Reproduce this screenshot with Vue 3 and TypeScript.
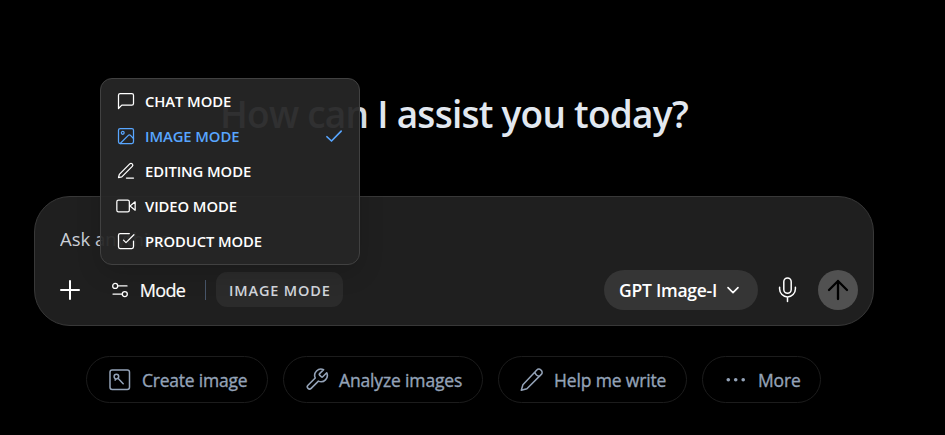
<script setup lang="ts">
import { ref } from 'vue'

interface Mode {
  id: string
  label: string
  paths: string[]
}

const modes: Mode[] = [
  { id: 'chat', label: 'CHAT MODE', paths: ['M21 15a2 2 0 0 1-2 2H7l-4 4V5a2 2 0 0 1 2-2h14a2 2 0 0 1 2 2z'] },
  {
    id: 'image',
    label: 'IMAGE MODE',
    paths: [
      'M5 3h14a2 2 0 0 1 2 2v14a2 2 0 0 1-2 2H5a2 2 0 0 1-2-2V5a2 2 0 0 1 2-2z',
      'M9.8 8.2a1.7 1.7 0 1 1-3.4 0 1.7 1.7 0 0 1 3.4 0z',
      'm21 15-3.6-3.8a1.8 1.8 0 0 0-2.6 0L5 21',
    ],
  },
  { id: 'editing', label: 'EDITING MODE', paths: ['M12.5 20.5H21', 'M16.5 3.5a2.12 2.12 0 0 1 3 3L7 19l-4 1 1-4z'] },
  {
    id: 'video',
    label: 'VIDEO MODE',
    paths: ['M3 5h11a2 2 0 0 1 2 2v10a2 2 0 0 1-2 2H3a2 2 0 0 1-2-2V7a2 2 0 0 1 2-2z', 'm23 7-6.2 5 6.2 5z'],
  },
  {
    id: 'product',
    label: 'PRODUCT MODE',
    paths: ['m9 11 3 3L21.5 4.5', 'M21 12v7a2 2 0 0 1-2 2H5a2 2 0 0 1-2-2V5a2 2 0 0 1 2-2h11'],
  },
]

const selected = ref('image')
const prompt = ref('')
</script>

<template>
  <main class="page">
    <h1 class="title">How can I assist you today?</h1>

    <section class="composer">
      <input v-model="prompt" class="prompt" type="text" placeholder="Ask anything" />
      <div class="toolbar">
        <button class="plain add" aria-label="Add">
          <svg width="24" height="24" viewBox="0 0 24 24" stroke-width="2"><path d="M12 3v18M3 12h18" /></svg>
        </button>
        <button class="plain mode">
          <svg width="18" height="18" viewBox="0 0 18 18" stroke-width="1.3">
            <circle cx="4.2" cy="4.9" r="2.5" /><path d="M6.8 4.9H16M2 13.1h9.2" /><circle cx="13.8" cy="13.1" r="2.5" />
          </svg>
          <span class="mode-text">Mode</span>
        </button>
        <span class="divider"></span>
        <span class="badge">IMAGE MODE</span>
        <button class="model">
          <span class="model-text">GPT Image-I</span>
          <svg width="16" height="16" viewBox="0 0 24 24" stroke-width="2.4"><path d="m4.5 8.5 7.5 7.5 7.5-7.5" /></svg>
        </button>
        <button class="plain mic" aria-label="Dictate">
          <svg width="24" height="26" viewBox="0 0 24 26" stroke-width="1.5">
            <rect x="8.8" y="1" width="7.4" height="15.2" rx="3.7" />
            <path d="M4.6 10.3v1.7a7.9 7.9 0 0 0 15.8 0v-1.7M12.5 19.9v4.6" />
          </svg>
        </button>
        <button class="send" aria-label="Send">
          <svg width="24" height="24" viewBox="0 0 24 24" stroke-width="2.3"><path d="M12 21V3M3 12l9-9 9 9" /></svg>
        </button>
      </div>
    </section>

    <nav class="actions">
      <button class="chip create">
        <svg width="24" height="24" viewBox="0 0 24 24" stroke-width="1.5">
          <rect x="2" y="2" width="19.5" height="19.5" rx="2.2" />
          <circle cx="8.4" cy="8.6" r="2.3" /><path d="m10 10.2 5.2 5.5M7.8 10.8l-.7 1.4" />
        </svg>
        <span>Create image</span>
      </button>
      <button class="chip analyze">
        <svg width="24" height="24" viewBox="0 0 24 24" stroke-width="1.5">
          <path d="M14.7 6.3a1 1 0 0 0 0 1.4l1.6 1.6a1 1 0 0 0 1.4 0l3.77-3.77a6 6 0 0 1-7.94 7.94l-6.91 6.91a2.12 2.12 0 0 1-3-3l6.91-6.91a6 6 0 0 1 7.94-7.94z" transform="translate(-.8 -1) scale(1.05)" />
        </svg>
        <span>Analyze images</span>
      </button>
      <button class="chip write">
        <svg width="24" height="24" viewBox="0 0 24 24" stroke-width="1.5">
          <path d="m16.9 2.4a2.8 2.8 0 0 1 4 0l.5.5a2.8 2.8 0 0 1 0 4L7 21.2l-5.6 1.6L3 17.2zM15.2 4.2a4.4 4.4 0 0 0 4.6 4.5" transform="translate(-.1 -.5)" />
        </svg>
        <span>Help me write</span>
      </button>
      <button class="chip more">
        <svg width="24" height="24" viewBox="0 0 24 24" stroke="none">
          <circle cx="4.3" cy="11.8" r="1.8" /><circle cx="11.7" cy="11.8" r="1.8" /><circle cx="19.2" cy="11.8" r="1.8" />
        </svg>
        <span>More</span>
      </button>
    </nav>

    <ul class="menu">
      <li
        v-for="mode in modes"
        :key="mode.id"
        :class="['option', mode.id, { active: mode.id === selected }]"
        @click="selected = mode.id"
      >
        <svg width="20" height="20" viewBox="0 0 24 24" stroke-width="1.5">
          <path v-for="d in mode.paths" :key="d" :d="d" />
        </svg>
        <span class="label">{{ mode.label }}</span>
        <svg v-if="mode.id === selected" class="check" width="20" height="20" viewBox="0 0 24 24" stroke-width="2">
          <path d="M3.5 12.9 9 18 20.6 6.2" />
        </svg>
      </li>
    </ul>
  </main>
</template>

<style>
body {
  background: #000;
}
</style>

<style scoped>
.page {
  position: relative;
  box-sizing: border-box;
  width: 945px;
  height: 435px;
  padding: 84px 71px 0 34px;
  overflow: hidden;
  background: #000;
  color: #fff;
  font-family: 'Segoe UI', 'Open Sans', 'Noto Sans', sans-serif;
}
svg {
  display: block;
  flex: none;
  fill: none;
  stroke: currentColor;
  stroke-linecap: round;
  stroke-linejoin: round;
}
svg[stroke='none'] {
  fill: currentColor;
  stroke: none;
}
button {
  display: flex;
  align-items: center;
  margin: 0;
  padding: 0;
  border: 0;
  background: none;
  color: inherit;
  font-family: inherit;
  white-space: nowrap;
}
.title {
  height: 60px;
  margin: 0;
  color: #e2e8f0;
  font-size: 37px;
  font-weight: 600;
  letter-spacing: -0.74px;
  line-height: 60px;
  text-align: center;
  white-space: nowrap;
}
.composer {
  box-sizing: border-box;
  width: 840px;
  height: 130px;
  margin-top: 52px;
  padding: 24px 15px 15px 24px;
  border: 1px solid #383838;
  border-radius: 36px;
  background: #1f1f1f;
}
.prompt {
  display: block;
  width: 100%;
  height: 34px;
  padding: 0 0 0 1px;
  border: 0;
  outline: 0;
  background: none;
  color: #fff;
  font-family: inherit;
  font-size: 18.5px;
}
.prompt::placeholder {
  color: #cbd0d8;
}
.toolbar {
  display: flex;
  align-items: center;
  height: 40px;
  margin-top: 15px;
}
.add {
  margin-left: -1px;
}
.mode {
  gap: 10px;
  margin-left: 29px;
  font-size: 18px;
  letter-spacing: -0.7px;
  -webkit-text-stroke: 0.2px currentColor;
}
.mode-text {
  width: 47px;
}
.divider {
  width: 1px;
  height: 20px;
  margin-left: 19px;
  background: #475569;
}
.badge {
  box-sizing: border-box;
  width: 127px;
  height: 35px;
  margin: 0 0 1px 10px;
  padding-left: 13px;
  border-radius: 11px;
  background: #2b2b2b;
  color: #d1d5db;
  font-size: 14.5px;
  font-weight: 600;
  letter-spacing: 0.85px;
  line-height: 37px;
  white-space: nowrap;
}
.model {
  box-sizing: border-box;
  width: 154px;
  height: 40px;
  margin-left: auto;
  padding: 0 17px 0 15px;
  justify-content: space-between;
  border-radius: 20px;
  background: #353535;
  font-size: 17.5px;
  font-weight: 600;
  letter-spacing: -0.25px;
}
.mic {
  margin-left: 17px;
}
.send {
  justify-content: center;
  width: 40px;
  height: 40px;
  margin-left: 19px;
  border-radius: 50%;
  background: #515151;
  color: #000;
}
.actions {
  display: flex;
  gap: 15px;
  margin: 30px 0 0 52px;
}
.chip {
  box-sizing: border-box;
  height: 47px;
  padding-left: 21px;
  gap: 10px;
  border: 1px solid #1c1c1c;
  border-radius: 24px;
  color: #94a3b8;
  font-size: 17.5px;
  letter-spacing: -0.15px;
  -webkit-text-stroke: 0.35px currentColor;
}
.create { width: 182px; }
.create span { letter-spacing: -0.22px; }
.analyze { width: 200px; }
.write { width: 189px; }
.more { width: 119px; }
.menu {
  position: absolute;
  top: 78px;
  left: 100px;
  box-sizing: border-box;
  width: 260px;
  height: 187px;
  margin: 0;
  padding: 4px 5px;
  border: 1px solid #414141;
  border-radius: 12px;
  background: rgba(38, 38, 38, 0.95);
  box-shadow: 0 8px 24px rgba(0, 0, 0, 0.15);
  list-style: none;
}
.option {
  display: flex;
  align-items: center;
  height: 35px;
  padding: 0 10px;
  gap: 9px;
  font-size: 14.8px;
  font-weight: 600;
  letter-spacing: -0.08px;
  white-space: nowrap;
}
.active {
  color: #58a6ff;
}
.check {
  margin-left: auto;
}
</style>
